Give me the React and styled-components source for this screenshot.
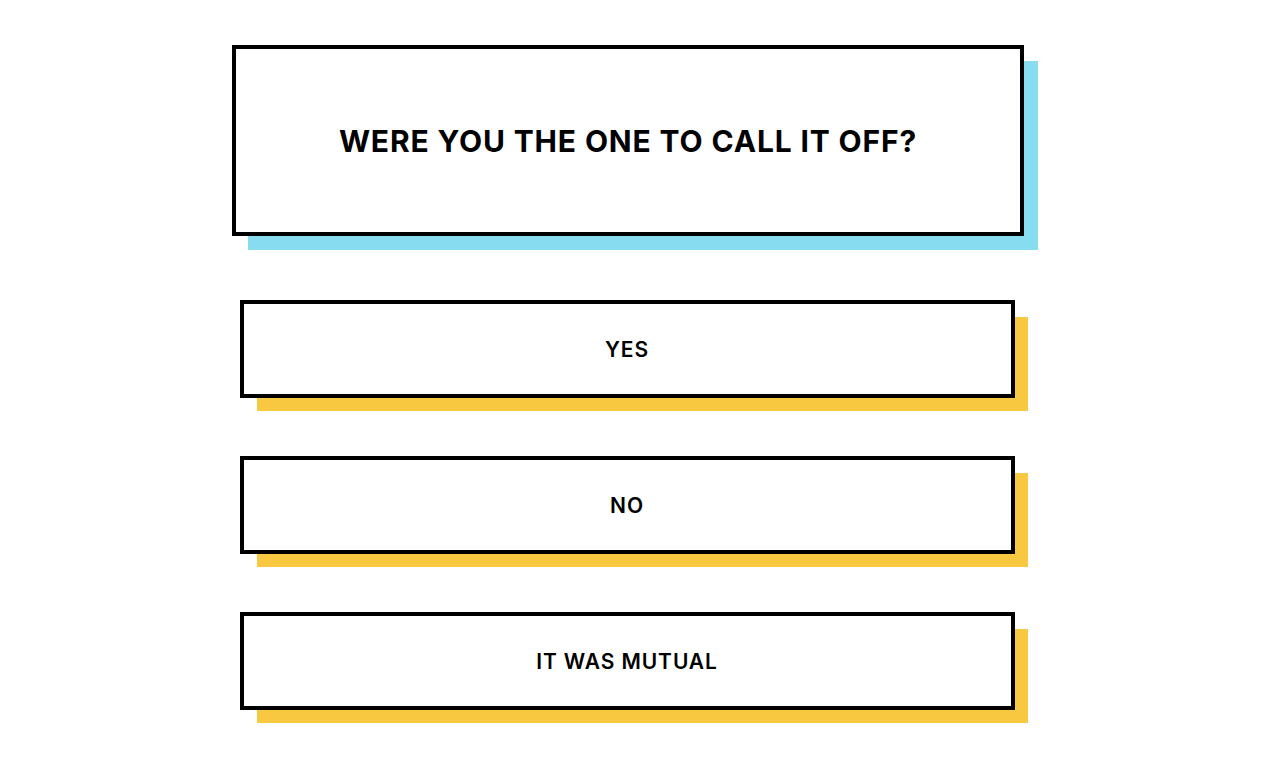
import React from "react";
import styled, { createGlobalStyle } from "styled-components";

const GlobalStyle = createGlobalStyle`
  html, body {
    margin: 0;
    padding: 0;
    background: #ffffff;
  }
  body {
    font-family: "Inter", "Liberation Sans", sans-serif;
    color: #000000;
  }
`;

const Pagina = styled.div`
  display: flex;
  flex-direction: column;
  align-items: center;
  padding: 45px 14px 40px 0;
`;

const Domanda = styled.div`
  box-sizing: border-box;
  width: 792px;
  height: 191px;
  border: 4px solid #000;
  background: #fff;
  box-shadow: 15px 15px 0 -1px #87dcef;
  display: flex;
  align-items: center;
  justify-content: center;
  margin-bottom: 64px;

  h1 {
    margin: 0;
    font-size: 30px;
    font-weight: 700;
    letter-spacing: 0.85px;
    text-transform: uppercase;
  }
`;

const Risposte = styled.div`
  display: flex;
  flex-direction: column;
  gap: 58px;
  margin-right: 2px;
`;

const Risposta = styled.button`
  box-sizing: border-box;
  width: 775px;
  height: 98px;
  border: 4px solid #000;
  background: #fff;
  box-shadow: 15px 15px 0 -2px ${(p) => p.ombra || "#f8c940"};
  font-family: inherit;
  font-size: 21px;
  font-weight: 600;
  letter-spacing: 0.9px;
  color: #000;
  text-transform: uppercase;
  cursor: pointer;
  padding: 1px 0 0;

  &:hover {
    background: #fafafa;
  }
`;

const risposte = ["Yes", "No", "It was mutual"];

const App = () => {
  return (
    <>
      <GlobalStyle />
      <Pagina>
        <Domanda>
          <h1>Were you the one to call it off?</h1>
        </Domanda>
        <Risposte>
          {risposte.map((r) => (
            <Risposta key={r}>{r}</Risposta>
          ))}
        </Risposte>
      </Pagina>
    </>
  );
};

export default App;
